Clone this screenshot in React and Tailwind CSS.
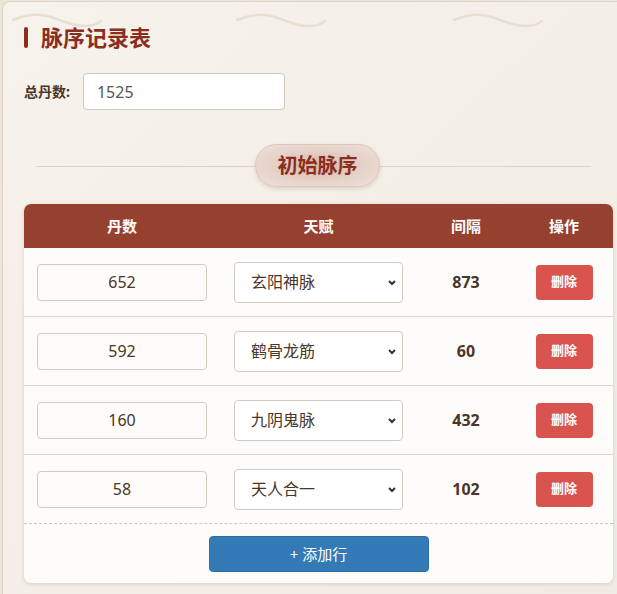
import { useState } from "react";

const TALENTS = ["玄阳神脉", "鹤骨龙筋", "九阴鬼脉", "天人合一"];

const INITIAL = [
  { id: 1, dan: "652", talent: "玄阳神脉", gap: 873 },
  { id: 2, dan: "592", talent: "鹤骨龙筋", gap: 60 },
  { id: 3, dan: "160", talent: "九阴鬼脉", gap: 432 },
  { id: 4, dan: "58", talent: "天人合一", gap: 102 },
];

// Vagues décoratives en haut de la carte
function Waves() {
  return (
    <svg className="pointer-events-none absolute left-0 top-0" width="617" height="34" viewBox="0 0 617 34" fill="none">
      {[10, 234, 451].map((x) => (
        <path
          key={x}
          d={`M${x} 18 C ${x + 14} 12, ${x + 26} 11, ${x + 38} 15 S ${x + 62} 25, ${x + 74} 24 S ${x + 84} 21, ${x + 88} 19`}
          stroke="#e7dfd3"
          strokeWidth="2.5"
          strokeLinecap="round"
        />
      ))}
    </svg>
  );
}

export default function App() {
  const [total, setTotal] = useState("1525");
  const [rows, setRows] = useState(INITIAL);

  const update = (id, key, v) => setRows((r) => r.map((x) => (x.id === id ? { ...x, [key]: v } : x)));

  return (
    <div
      className="min-h-[594px] w-[617px] overflow-hidden bg-[#ebe5da] pl-[2px] pt-[1px]"
      style={{ fontFamily: '"Noto Sans", "Noto Sans CJK SC", sans-serif' }}
    >
      <div className="relative h-[620px] w-[640px] rounded-tl-lg border-l border-t border-[#ddd4c6] bg-gradient-to-br from-[#f6f2ec] to-[#f1ece3] pl-[21px] pt-[21px]">
        <Waves />
        <div className="relative flex items-center">
          <span className="h-[21px] w-[4px] rounded-sm bg-[#8b2e1e]" />
          <h1 className="ml-[13px] text-[22px] font-bold leading-[28px] text-[#8b2e1e]">脉序记录表</h1>
        </div>

        <div className="mt-[22px] flex items-center">
          <label className="text-[14px] font-bold text-[#4a3526]">总丹数:</label>
          <input
            value={total}
            onChange={(e) => setTotal(e.target.value)}
            className="ml-[13px] h-[37px] w-[202px] rounded-[4px] border border-[#cfc8bd] bg-white px-[13px] text-[16px] text-[#555] outline-none"
          />
        </div>

        <div className="relative mt-[34px] flex h-[43px] w-[589px] items-center justify-center">
          <div className="absolute left-[12px] right-[22px] top-[22px] h-px bg-[#ddd3c6]" />
          <div className="relative ml-[-2px] flex h-[43px] w-[125px] items-center justify-center rounded-full border border-[#dcc6bc] bg-[radial-gradient(ellipse_at_center,#d8b7aa_0%,#e6d2c8_55%,#efe3dc_100%)] shadow-[0_2px_4px_rgba(120,70,50,0.18)]">
            <span className="text-[20px] font-bold text-[#8b2e1e]">初始脉序</span>
          </div>
        </div>

        <div className="mt-[17px] w-[589px] overflow-hidden rounded-[7px] bg-[#fdfcfa] shadow-[0_1px_4px_rgba(90,60,40,0.18)]">
          <div className="grid h-[44px] grid-cols-[196px_197px_98px_98px] items-center bg-[#96402f] text-center text-[15px] font-bold text-white">
            <div>丹数</div>
            <div>天赋</div>
            <div>间隔</div>
            <div>操作</div>
          </div>

          {rows.map((r, i) => (
            <div
              key={r.id}
              className={`grid h-[69px] grid-cols-[196px_197px_98px_98px] items-center ${
                i === rows.length - 1 ? "border-b border-dashed border-[#cfc6ba]" : "border-b border-[#ddd5ca]"
              }`}
            >
              <div className="px-[13px]">
                <input
                  value={r.dan}
                  onChange={(e) => update(r.id, "dan", e.target.value)}
                  className="h-[37px] w-full rounded-[4px] border border-[#d2cbc0] bg-[#fdfcfa] text-center text-[16px] text-[#4a3526] outline-none"
                />
              </div>
              <div className="px-[14px]">
                <div className="relative">
                  <select
                    value={r.talent}
                    onChange={(e) => update(r.id, "talent", e.target.value)}
                    className="h-[41px] w-full appearance-none rounded-[4px] border border-[#d2cbc0] bg-white pl-[16px] text-[16px] text-[#4a3526] outline-none"
                  >
                    {TALENTS.map((t) => (
                      <option key={t}>{t}</option>
                    ))}
                  </select>
                  <svg className="pointer-events-none absolute right-[7px] top-[18px]" width="8" height="6" viewBox="0 0 8 6">
                    <path d="M1 1 L4 4 L7 1" stroke="#333" strokeWidth="2" fill="none" />
                  </svg>
                </div>
              </div>
              <div className="text-center text-[16px] font-bold text-[#4a3526]">{r.gap}</div>
              <div className="flex justify-center">
                <button
                  onClick={() => setRows((x) => x.filter((y) => y.id !== r.id))}
                  className="h-[35px] w-[57px] rounded-[4px] bg-[#d9534f] text-[13px] font-bold text-white"
                >
                  删除
                </button>
              </div>
            </div>
          ))}

          <div className="flex justify-center pb-[11px] pt-[12px]">
            <button
              onClick={() =>
                setRows((x) => [...x, { id: Date.now(), dan: "", talent: TALENTS[0], gap: 0 }])
              }
              className="h-[36px] w-[220px] rounded-[4px] border border-[#2e6da4] bg-[#337ab7] text-[15px] text-white"
            >
              + 添加行
            </button>
          </div>
        </div>
      </div>
    </div>
  );
}
